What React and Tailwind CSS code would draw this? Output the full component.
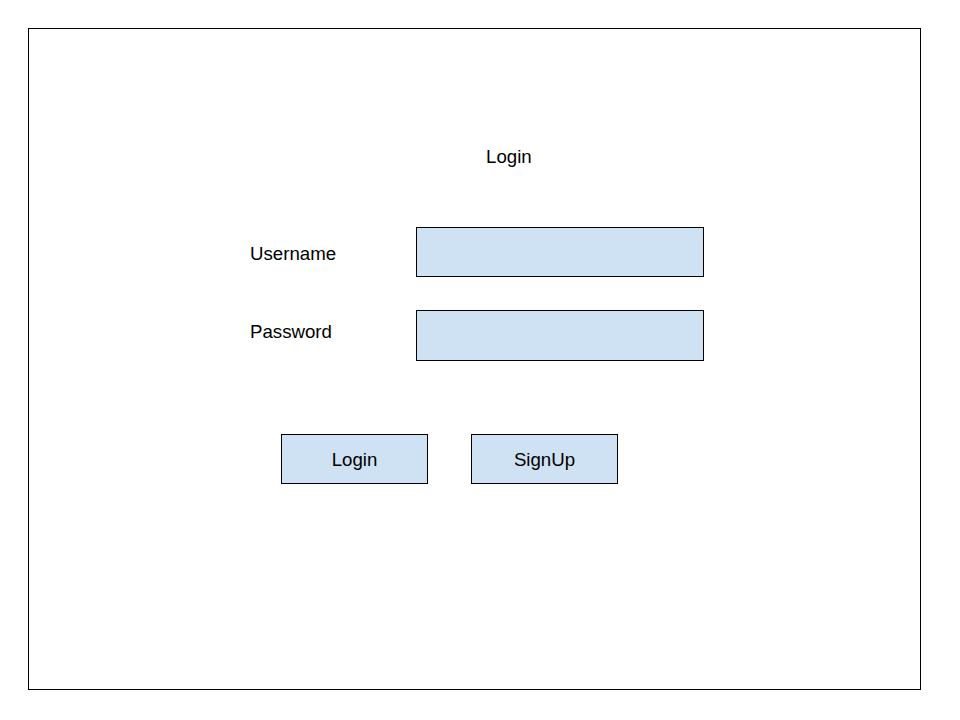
export default function App() {
  return (
    <div className="w-[960px] h-[720px] bg-white pt-[28px] pl-[28px] font-['Liberation_Sans',Arial,sans-serif] text-[18.67px] leading-[22px] text-black">
      <div className="w-[893px] h-[662px] border border-black flex flex-col">
        <div className="mt-[117px] pl-[457px]">Login</div>

        <div className="mt-[59px] pl-[221px] flex items-start">
          <label className="w-[166px] mt-[16px]">Username</label>
          <div className="w-[288px] h-[50px] border border-black bg-[#cfe2f3]" />
        </div>

        <div className="mt-[33px] pl-[221px] flex items-start">
          <label className="w-[166px] mt-[11px]">Password</label>
          <div className="w-[288px] h-[51px] border border-black bg-[#cfe2f3]" />
        </div>

        <div className="mt-[73px] pl-[252px] flex gap-[43px]">
          <button className="w-[147px] h-[50px] pt-[2px] border border-black bg-[#cfe2f3] flex items-center justify-center">
            Login
          </button>
          <button className="w-[147px] h-[50px] pt-[2px] border border-black bg-[#cfe2f3] flex items-center justify-center">
            SignUp
          </button>
        </div>
      </div>
    </div>
  );
}
